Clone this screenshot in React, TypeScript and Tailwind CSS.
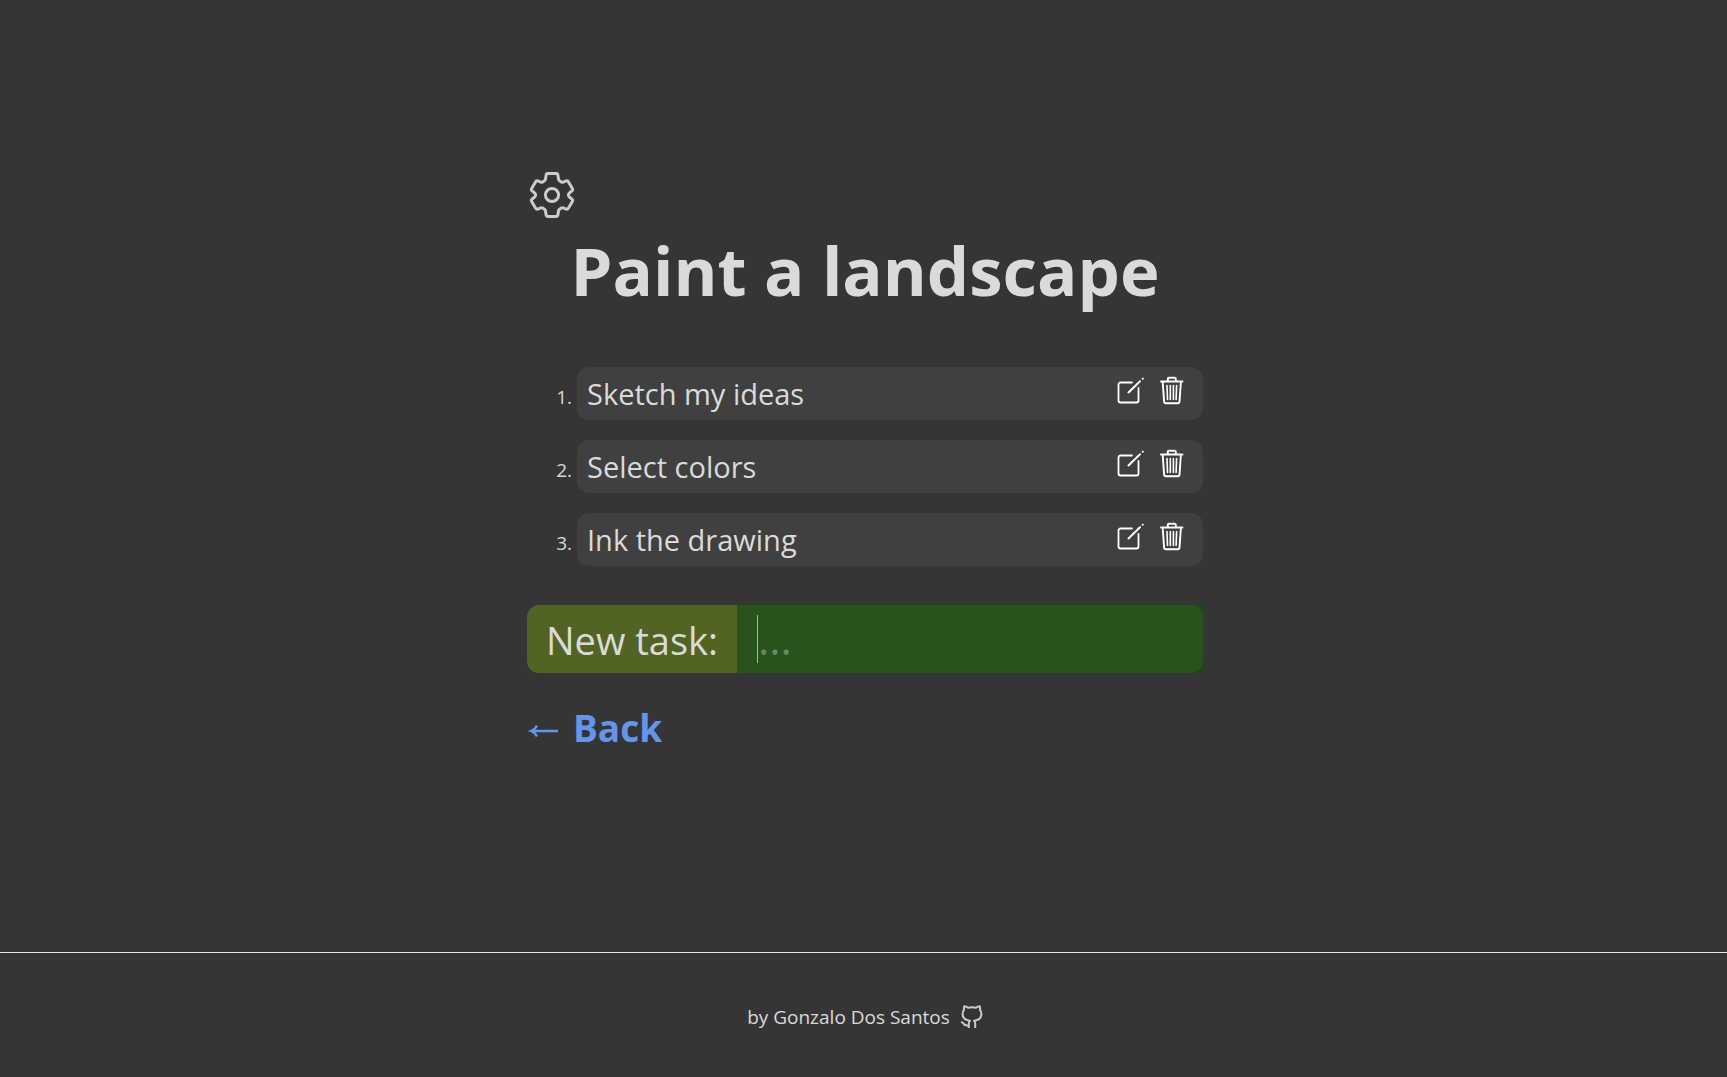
import React from "react";

const tasks = ["Sketch my ideas", "Select colors", "Ink the drawing"];

function GearIcon() {
  return (
    <svg width="50" height="50" viewBox="0 0 50 50" fill="none" stroke="currentColor" strokeWidth="3" strokeLinejoin="round" aria-hidden="true">
      <path d="M20.6 3.6h8.8q1.2 0 1.4 1.2l.8 4.6q.2 1 1.200 1.500l1.600 1q.8.5 1.700.2l3.200-1.200q1.200-.4 1.900.6l4.300 7.200q.6 1-.3 1.900l-3 2.600q-.8.700-.8 1.800t.8 1.800l3 2.600q.9.900.3 1.900l-4.300 7.200q-.7 1-1.900.6l-3.200-1.200q-.9-.3-1.700.2l-1.600 1q-1 .5-1.200 1.500l-.8 4.600q-.2 1.200-1.400 1.200h-8.800q-1.200 0-1.400-1.200l-.8-4.600q-.2-1-1.200-1.500l-1.600-1q-.8-.5-1.700-.2l-3.200 1.200q-1.200.4-1.900-.6l-4.300-7.200q-.6-1 .3-1.900l3-2.600q.8-.7.8-1.800t-.8-1.800l-3-2.600q-.9-.9-.3-1.900l4.300-7.200q.7-1 1.900-.6l3.200 1.200q.9.300 1.700-.2l1.600-1q1-.5 1.200-1.500l.8-4.600q.2-1.200 1.400-1.200Z" />
      <circle cx="25" cy="25" r="6.600" />
    </svg>
  );
}

function EditIcon() {
  return (
    <svg width="28" height="28" viewBox="0 0 28 28" fill="none" stroke="currentColor" strokeWidth="1.8" strokeLinecap="round" aria-hidden="true">
      <path d="M15 5.500H3.500a2 2 0 0 0-2 2v16a2 2 0 0 0 2 2h16a2 2 0 0 0 2-2V11" />
      <path d="M11.500 15.500 23 4.200M25.700 1.700l.1-.1" strokeWidth="2" />
    </svg>
  );
}

function TrashIcon() {
  return (
    <svg width="26" height="29" viewBox="0 0 26 29" fill="none" stroke="currentColor" strokeWidth="1.9" strokeLinejoin="round" strokeLinecap="round" aria-hidden="true">
      <path d="M2 5.500h21.500M8.800 5V3q0-1.300 1.300-1.300h5.400Q16.800 1.700 16.800 3v2M3.700 6l1.400 19.500q.1 1.700 1.800 1.700h11.800q1.700 0 1.800-1.700L21.900 6" />
      <path d="M8 9.500l.5 14M11.300 9.500v14M14.400 9.500v14M17.600 9.500l-.5 14" strokeWidth="1.600" />
    </svg>
  );
}

function GithubIcon() {
  return (
    <svg width="24" height="24" viewBox="0 0 24 24" fill="none" stroke="currentColor" strokeWidth="2" strokeLinejoin="round" aria-hidden="true">
      <path d="M8.800 23v-4.500q0-2 1.200-2.800C5.500 15.300 2.600 13 2.600 8.900q0-2.300 1.400-4-.4-2 .4-3.700 1.900.2 3.700 1.500 3.900-.8 7.800 0 1.800-1.300 3.700-1.500.8 1.700.4 3.700 1.400 1.700 1.400 4c0 4.100-2.900 6.400-7.400 6.800q1.200.8 1.200 2.800V23" />
      <path d="M8.800 20.300c-2.300.500-4.300-.1-5.300-1.700Q2.700 17.200 1 17" />
    </svg>
  );
}

export default function App() {
  return (
    <div className="flex min-h-screen flex-col bg-[#353535] font-['Open_Sans','Noto_Sans',sans-serif] text-[#dadada]">
      <main className="mx-auto flex w-full max-w-[679px] flex-1 flex-col pt-[170px] pl-[3px]">
        <button type="button" aria-label="Settings" className="w-[50px] text-[#cccccc]">
          <GearIcon />
        </button>
        <h1 className="mt-1.5 text-center text-[67px] leading-[88px] font-bold whitespace-nowrap">Paint a landscape</h1>
        <ol className="mt-[53px] flex flex-col gap-5">
          {tasks.map((task, i) => (
            <li key={task} className="flex items-center">
              <span className="w-[50px] pt-1.5 pr-[5px] text-right text-[19px] leading-6">{i + 1}.</span>
              <div className="flex h-[53px] flex-1 items-center rounded-xl bg-[#404040] pr-[18px] pl-2.5">
                <span className="flex-1 text-[29px] leading-10">{task}</span>
                <div className="flex items-center gap-3.5 pb-1.5 text-white">
                  <button type="button" aria-label={`Edit ${task}`}><EditIcon /></button>
                  <button type="button" aria-label={`Delete ${task}`}><TrashIcon /></button>
                </div>
              </div>
            </li>
          ))}
        </ol>
        <form className="mt-[39px] flex h-[68px] rounded-l-xl bg-[#1d4423]" onSubmit={(e) => e.preventDefault()}>
          <label htmlFor="new-task" className="flex w-[210px] items-center justify-center rounded-l-xl bg-[#526424] pt-0.5 text-[38px] leading-[52px] whitespace-nowrap">
            New task:
          </label>
          <div className="flex min-w-0 flex-1 items-center rounded-r-xl bg-[#28531b] pl-5">
            <span className="h-12 w-px bg-[#a9b8a4]" />
            <input id="new-task" type="text" placeholder="..." className="min-w-0 flex-1 bg-transparent text-[43px] leading-[52px] outline-none placeholder:text-[#6d8666]" />
          </div>
        </form>
        <a href="#" className="mt-7 flex items-center gap-3.5 self-start pl-px text-[37px] leading-[54px] font-bold text-[#6495ed]">
          <svg width="31" height="20" viewBox="0 0 31 20" fill="none" stroke="currentColor" strokeWidth="2.400" className="mt-1.5" aria-hidden="true">
            <path d="M30 10H4M9 4.500Q7 8.500 3 10q4 1.500 6 5.500" />
          </svg>
          Back
        </a>
      </main>
      <footer className="flex h-[125px] items-center justify-center gap-2.5 border-t border-[#e6e6e6] pt-1 pl-1 text-[19px] leading-6">
        <span>by Gonzalo Dos Santos</span>
        <a href="#" aria-label="GitHub" className="text-[#cccccc]"><GithubIcon /></a>
      </footer>
    </div>
  );
}
